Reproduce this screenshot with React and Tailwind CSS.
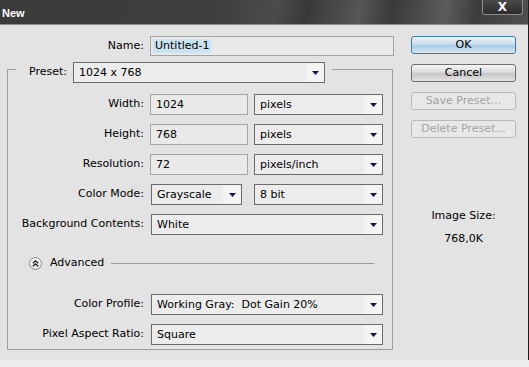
import React from "react";

function Arrow() {
  return (
    <span className="flex w-[18px] h-full items-center justify-center bg-[#f4f4f4]">
      <svg width="7" height="4" viewBox="0 0 7 4">
        <path d="M0 0h7L3.5 4z" fill="#15154a" />
      </svg>
    </span>
  );
}

function Select({ value, className }) {
  return (
    <div className={"flex h-[21px] items-stretch border border-[#6b6b6b] bg-[#ececec] " + className}>
      <span className="flex-1 pl-[5px] leading-[19px] whitespace-pre overflow-hidden">{value}</span>
      <Arrow />
    </div>
  );
}

function Field({ value }) {
  return (
    <div className="ml-[6px] h-[21px] w-[98px] border border-[#a6a6a6] bg-[#e9e9e9] pl-[5px] leading-[19px]">
      {value}
    </div>
  );
}

function Label({ children }) {
  return <div className="w-[136px] text-right whitespace-nowrap">{children}</div>;
}

function Button({ children, kind }) {
  const styles = {
    ok: "border-[#3b79ab] bg-[linear-gradient(#eef5fb,#c7ddef_45%,#a9cbe7_55%,#d9e9f5)] text-black",
    normal: "border-[#6f6f6f] bg-[linear-gradient(#f6f6f6,#dcdcdc_45%,#c6c6c6_55%,#e4e4e4)] text-black",
    disabled: "border-[#b9b9b9] bg-[#e8e8e8] text-[#a3a3a3]",
  };
  return (
    <div className={"flex h-[18px] w-[105px] items-center justify-center rounded-[3px] border " + styles[kind]}>
      {children}
    </div>
  );
}

export default function App() {
  return (
    <div
      className="w-[529px] h-[367px] overflow-hidden bg-[#ececec] text-[11px] text-black"
      style={{ fontFamily: '"DejaVu Sans", Verdana, sans-serif' }}
    >
      <div className="flex h-[360px] flex-col border-r border-[#1c1c1c] bg-[#e3e3e3]">
        {/* title bar */}
        <div className="flex h-[24px] items-start justify-between bg-[linear-gradient(100deg,#3b3b3b_0%,#3d3d3d_40%,#4c4c4c_52%,#393939_58%,#565656_68%,#3a3a3a_74%,#5b5b5b_84%,#3c3c3c_90%,#505050_100%)]">
          <div
            className="ml-[2px] mt-[5px] text-[11px] font-bold text-white"
            style={{ fontFamily: '"Liberation Sans", Arial, sans-serif' }}
          >
            New
          </div>
          <div className="mr-[5px] flex h-[15px] w-[41px] items-center justify-center rounded-b-[3px] border border-t-0 border-[#8a8a8a] bg-[linear-gradient(#4a4a4a,#2c2c2c)] text-[12px] font-bold text-white">
            X
          </div>
        </div>
        <div className="h-px bg-[#8c8c8c]" />

        {/* body */}
        <div className="flex flex-1">
          <div className="w-[394px] pt-[11px]">
            <div className="flex h-[20px] items-center">
              <div className="w-[144px] text-right">Name:</div>
              <div className="ml-[6px] flex h-[20px] w-[244px] items-center border border-[#a3a3a3] bg-[#e9e9e9] pl-[2px]">
                <span className="bg-[#c9e3f1] px-[2px] leading-[14px]">Untitled-1</span>
              </div>
            </div>

            <fieldset className="ml-[7px] w-[386px] border border-[#9e9e9e] pb-[4px]">
              <legend className="ml-[8px] pl-[13px] pr-[7px] pt-[6px]">
                <div className="flex items-center">
                  <span>Preset:</span>
                  <Select value="1024 x 768" className="ml-[6px] w-[252px]" />
                </div>
              </legend>

              <div className="flex flex-col gap-[9px] pt-[11px]">
                <div className="flex items-center">
                  <Label>Width:</Label>
                  <Field value="1024" />
                  <Select value="pixels" className="ml-[6px] w-[129px]" />
                </div>
                <div className="flex items-center">
                  <Label>Height:</Label>
                  <Field value="768" />
                  <Select value="pixels" className="ml-[6px] w-[129px]" />
                </div>
                <div className="flex items-center">
                  <Label>Resolution:</Label>
                  <Field value="72" />
                  <Select value="pixels/inch" className="ml-[6px] w-[129px]" />
                </div>
                <div className="flex items-center">
                  <Label>Color Mode:</Label>
                  <Select value="Grayscale" className="ml-[7px] w-[91px]" />
                  <Select value="8 bit" className="ml-[12px] w-[129px]" />
                </div>
                <div className="flex items-center">
                  <Label>Background Contents:</Label>
                  <Select value="White" className="ml-[7px] w-[232px]" />
                </div>
              </div>

              <div className="mt-[20px] flex h-[16px] items-center pl-[21px] pr-[18px]">
                <div className="flex h-[13px] w-[13px] items-center justify-center rounded-full border border-[#8d8d8d] bg-[linear-gradient(#ffffff,#dedede)]">
                  <svg width="7" height="7" viewBox="0 0 7 7">
                    <path d="M0.8 3.3L3.5 0.8L6.2 3.3M0.8 6.3L3.5 3.8L6.2 6.3" fill="none" stroke="#1a1a1a" strokeWidth="1.2" />
                  </svg>
                </div>
                <span className="ml-[8px]">Advanced</span>
                <div className="ml-[7px] h-px flex-1 bg-[#9a9a9a]" />
              </div>

              <div className="mt-[23px] flex flex-col gap-[9px]">
                <div className="flex items-center">
                  <Label>Color Profile:</Label>
                  <Select value="Working Gray:  Dot Gain 20%" className="ml-[7px] w-[232px]" />
                </div>
                <div className="flex items-center">
                  <Label>Pixel Aspect Ratio:</Label>
                  <Select value="Square" className="ml-[7px] w-[232px]" />
                </div>
              </div>
            </fieldset>
          </div>

          <div className="flex flex-col pl-[17px] pt-[11px]">
            <div className="flex flex-col gap-[10px]">
              <Button kind="ok">OK</Button>
              <Button kind="normal">Cancel</Button>
              <Button kind="disabled">Save Preset...</Button>
              <Button kind="disabled">Delete Preset...</Button>
            </div>
            <div className="mt-[71px] w-[105px] text-center leading-[14px]">Image Size:</div>
            <div className="mt-[9px] w-[105px] text-center leading-[14px]">768,0K</div>
          </div>
        </div>
      </div>
    </div>
  );
}
